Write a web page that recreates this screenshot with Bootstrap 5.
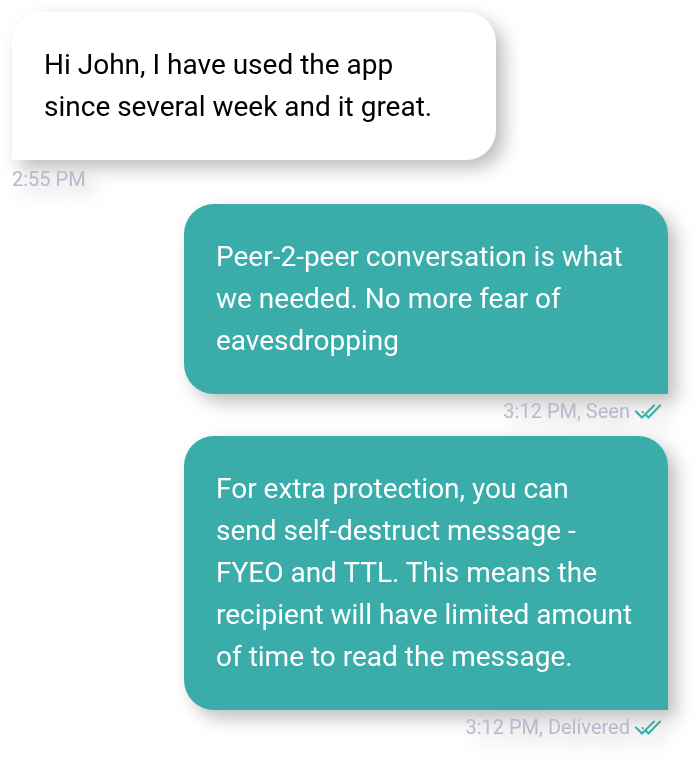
<!DOCTYPE html>
<html lang="en">
<head>
<meta charset="utf-8">
<meta name="viewport" content="width=device-width, initial-scale=1">
<title>Conversation</title>
<link href="https://cdn.jsdelivr.net/npm/bootstrap@5.3.0/dist/css/bootstrap.min.css" rel="stylesheet">
<style>
body { font-family: Roboto, sans-serif; background: #fff; color: #000; }
.chat { padding: 12px 28px 12px 12px; filter: drop-shadow(8px 8px 9px rgba(0, 0, 0, .26)); }
.message { width: 75%; max-width: 484px; }
.bubble { padding: 32px; font-size: 28px; line-height: 42px; border-radius: 30px; }
.bubble-in { background: #fff; border-bottom-left-radius: 0; }
.bubble-out { background: #3aadaa; color: #fff; border-bottom-right-radius: 0; }
.stamp { font-size: 20px; line-height: 24px; padding-top: 7px; margin-bottom: 13px; color: #b5b9cc; }
.stamp-out { padding: 5px 6px 0 0; gap: 4px; }
.ticks { width: 28px; height: 16px; }
</style>
<script src="https://cdn.jsdelivr.net/npm/bootstrap@5.3.0/dist/js/bootstrap.bundle.min.js" defer></script>
</head>
<body>
<main class="chat d-flex flex-column">
  <article class="message align-self-start">
    <p class="bubble bubble-in mb-0">Hi John, I have used the app since several week and it great.</p>
    <div class="stamp">2:55 PM</div>
  </article>
  <article class="message align-self-end">
    <p class="bubble bubble-out mb-0">Peer-2-peer conversation is what we needed. No more fear of eavesdropping</p>
    <div class="stamp stamp-out d-flex justify-content-end align-items-center">3:12 PM, Seen
      <svg class="ticks" viewBox="0 0 28 16" fill="none" stroke="#3aadaa" stroke-width="2.1" stroke-linecap="round" aria-hidden="true"><path d="M2 8.500L8 14.500L20 2.500M8.500 9l.3 .3M12.500 12.500l2 2L26 2.500"/></svg>
    </div>
  </article>
  <article class="message align-self-end">
    <p class="bubble bubble-out mb-0">For extra protection, you can send self-destruct message - FYEO and TTL. This means the recipient will have limited amount of time to read the message.</p>
    <div class="stamp stamp-out d-flex justify-content-end align-items-center">3:12 PM, Delivered
      <svg class="ticks" viewBox="0 0 28 16" fill="none" stroke="#3aadaa" stroke-width="2.1" stroke-linecap="round" aria-hidden="true"><path d="M2 8.500L8 14.500L20 2.500M8.500 9l.3 .3M12.500 12.500l2 2L26 2.500"/></svg>
    </div>
  </article>
</main>
</body>
</html>
